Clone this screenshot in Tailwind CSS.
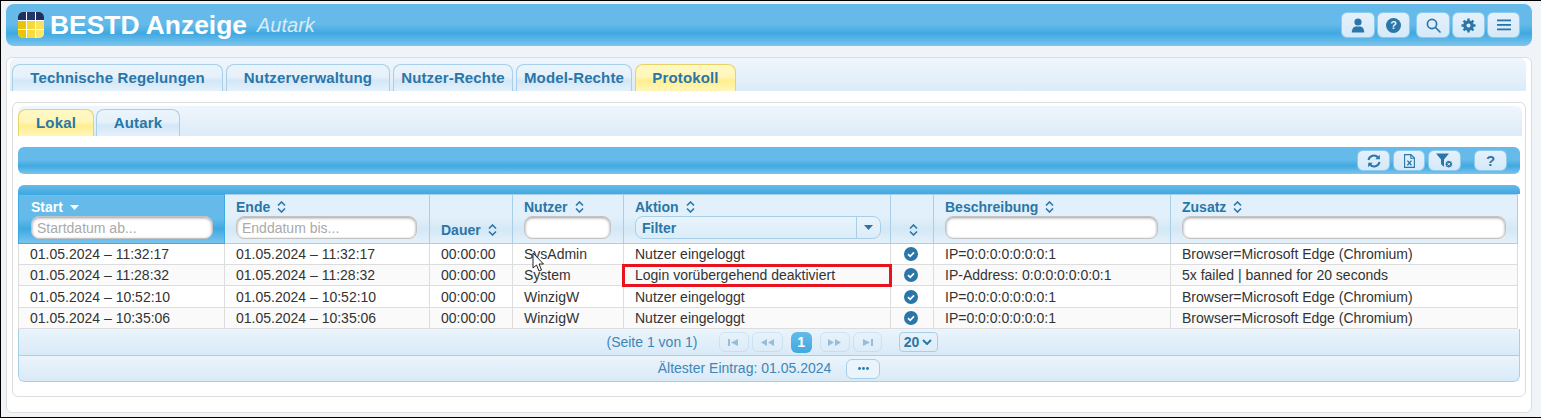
<!DOCTYPE html>
<html lang="de">
<head>
  <meta charset="UTF-8" />
  <meta name="viewport" content="width=device-width, initial-scale=1.0"/>
  <title>BESTD Anzeige</title>
  <script src="https://cdn.jsdelivr.net/npm/@tailwindcss/browser@4"></script>
</head>
<body class="h-[418px] w-[1541px] overflow-hidden border-t border-b border-l border-black bg-[#f0f4f8] font-['Liberation_Sans',Arial,sans-serif] text-[14px] text-[#333]">

  <!-- Kopfzeile -->
  <header class="ml-[5px] mt-[3px] flex h-[42px] w-[1526px] items-center rounded-lg bg-[linear-gradient(#65bae9_0%,#65bae9_48%,#3fa9e1_70%,#7cc5ee_100%)] pl-3 pr-3">
    <div class="grid h-[26px] w-[26px] grid-cols-3 grid-rows-3 gap-px overflow-hidden rounded-[5px] bg-white">
      <span class="bg-[#1d2f5e]"></span><span class="bg-[#22366a]"></span><span class="bg-[#1d2f5e]"></span>
      <span class="bg-[#e8c40c]"></span><span class="bg-[#f5d93a]"></span><span class="bg-[#fbe25a]"></span>
      <span class="bg-[#e8c40c]"></span><span class="bg-[#f7dc40]"></span><span class="bg-[#fde768]"></span>
    </div>
    <h1 class="ml-[6px] text-[26.4px] font-bold leading-none text-white">BESTD Anzeige</h1>
    <span class="ml-[10px] text-[20px] italic leading-none text-[#d8ebf7]">Autark</span>
    <div class="ml-auto flex h-[26px] items-center">
      <button class="flex h-[26px] w-[34px] items-center justify-center rounded-md border border-[#8ccbee] bg-[linear-gradient(#e4f1fb,#d5e9f8)]">
        <svg width="14" height="15" viewBox="0 0 14 15" fill="#2a76a8"><circle cx="7" cy="4" r="3.6"/><path d="M0.8 14.5c0-4 2.2-6 4-6h4.4c1.800 0 4 2 4 6z"/></svg>
      </button>
      <button class="ml-[2px] flex h-[26px] w-[33px] items-center justify-center rounded-md border border-[#8ccbee] bg-[linear-gradient(#e4f1fb,#d5e9f8)]">
        <span class="flex h-[15px] w-[15px] items-center justify-center rounded-full bg-[#2a76a8] text-[11px] font-bold leading-none text-[#e4f1fb]">?</span>
      </button>
      <button class="ml-[6px] flex h-[26px] w-[34px] items-center justify-center rounded-md border border-[#8ccbee] bg-[linear-gradient(#e4f1fb,#d5e9f8)]">
        <svg width="15" height="15" viewBox="0 0 15 15" fill="none" stroke="#2a76a8" stroke-width="1.700"><circle cx="6" cy="6" r="4.600"/><path d="M9.500 9.500l4.500 4.500" stroke-linecap="round"/></svg>
      </button>
      <button class="ml-[2px] flex h-[26px] w-[33px] items-center justify-center rounded-md border border-[#8ccbee] bg-[linear-gradient(#e4f1fb,#d5e9f8)]">
        <svg width="15" height="15" viewBox="0 0 16 16" fill="none" stroke="#2a76a8"><circle cx="8" cy="8" r="3.900" stroke-width="3.400"/><path d="M8 .5v3M8 12.500v3M.5 8h3M12.500 8h3M2.700 2.700l2 2M11.300 11.300l2 2M13.300 2.700l-2 2M4.700 11.300l-2 2" stroke-width="2.600"/></svg>
      </button>
      <button class="ml-[2px] flex h-[26px] w-[33px] items-center justify-center rounded-md border border-[#8ccbee] bg-[linear-gradient(#e4f1fb,#d5e9f8)]">
        <svg width="14" height="12" viewBox="0 0 14 12" fill="#2a76a8"><rect y="0.500" width="14" height="1.800"/><rect y="5" width="14" height="1.800"/><rect y="9.500" width="14" height="1.800"/></svg>
      </button>
    </div>
  </header>

  <!-- Hauptbereich -->
  <main class="ml-[5px] mt-[11px] h-[356px] w-[1526px] rounded-md border border-[#ddd] bg-white px-[3px]">
    <nav class="flex h-[33px] w-[1516px] items-end gap-[3px] rounded-t-md bg-[linear-gradient(#f0f6fc,#dcebf8)] pl-[2px]">
      <a class="flex h-[27px] w-[211px] items-center justify-center rounded-t-lg border border-b-0 border-[#a9cfe8] bg-[linear-gradient(#eaf4fc_0%,#e6f1fa_45%,#d3e7f6_60%,#e4f1fb_100%)] text-[15px] font-bold tracking-[0.15px] text-[#2a76a8]">Technische Regelungen</a>
      <a class="flex h-[27px] w-[164px] items-center justify-center rounded-t-lg border border-b-0 border-[#a9cfe8] bg-[linear-gradient(#eaf4fc_0%,#e6f1fa_45%,#d3e7f6_60%,#e4f1fb_100%)] text-[15px] font-bold tracking-[0.15px] text-[#2a76a8]">Nutzerverwaltung</a>
      <a class="flex h-[27px] w-[120px] items-center justify-center rounded-t-lg border border-b-0 border-[#a9cfe8] bg-[linear-gradient(#eaf4fc_0%,#e6f1fa_45%,#d3e7f6_60%,#e4f1fb_100%)] text-[15px] font-bold tracking-[0.15px] text-[#2a76a8]">Nutzer-Rechte</a>
      <a class="flex h-[27px] w-[116px] items-center justify-center rounded-t-lg border border-b-0 border-[#a9cfe8] bg-[linear-gradient(#eaf4fc_0%,#e6f1fa_45%,#d3e7f6_60%,#e4f1fb_100%)] text-[15px] font-bold tracking-[0.15px] text-[#2a76a8]">Model-Rechte</a>
      <a class="flex h-[27px] w-[101px] items-center justify-center rounded-t-lg border border-b-0 border-[#e6d36a] bg-[linear-gradient(#fff8c4_0%,#fff6b8_45%,#ffef8f_60%,#fff6bc_100%)] text-[15px] font-bold tracking-[0.15px] text-[#2a76a8]">Protokoll</a>
    </nav>

    <section class="ml-[2px] mt-[11px] h-[295px] w-[1514px] rounded-md border border-[#ddd] bg-white px-[5px] pt-[3px]">
      <nav class="flex h-[30px] w-[1504px] items-end gap-[2px] rounded-t-md bg-[linear-gradient(#f0f6fc,#dcebf8)]">
        <a class="flex h-[27px] w-[76px] items-center justify-center rounded-t-lg border border-b-0 border-[#e6d36a] bg-[linear-gradient(#fff8c4_0%,#fff6b8_45%,#ffef8f_60%,#fff6bc_100%)] text-[15px] font-bold tracking-[0.15px] text-[#2a76a8]">Lokal</a>
        <a class="flex h-[27px] w-[84px] items-center justify-center rounded-t-lg border border-b-0 border-[#a9cfe8] bg-[linear-gradient(#eaf4fc_0%,#e6f1fa_45%,#d3e7f6_60%,#e4f1fb_100%)] text-[15px] font-bold tracking-[0.15px] text-[#2a76a8]">Autark</a>
      </nav>

      <!-- Werkzeugleiste -->
      <div class="mt-[11px] flex h-[27px] w-[1502px] items-center justify-end rounded-md bg-[linear-gradient(#65bae9_0%,#65bae9_48%,#3fa9e1_70%,#7cc5ee_100%)] pr-[13px]">
        <button class="flex h-[21px] w-[33px] items-center justify-center rounded-md border border-[#8ccbee] bg-[linear-gradient(#e4f1fb,#d5e9f8)]">
          <svg width="14" height="14" viewBox="0 0 14 14" fill="none" stroke="#2a76a8" stroke-width="2"><path d="M1.500 6A5.500 5.500 0 0 1 11 3.500"/><path d="M12.500 8A5.500 5.500 0 0 1 3 10.500"/><path d="M12.800 0.800v4.500H8.300z" fill="#2a76a8" stroke="none"/><path d="M1.200 13.200V8.700h4.500z" fill="#2a76a8" stroke="none"/></svg>
        </button>
        <button class="ml-[3px] flex h-[21px] w-[32px] items-center justify-center rounded-md border border-[#8ccbee] bg-[linear-gradient(#e4f1fb,#d5e9f8)]">
          <svg width="11" height="14" viewBox="0 0 11 14" fill="none" stroke="#2a76a8" stroke-width="1.100"><path d="M0.600 0.600h6.300l3.500 3.500v9.300H0.600z"/><path d="M6.800 0.600v3.600h3.600"/><path d="M3.400 6.600l4 4.600M7.400 6.600l-4 4.600" stroke-width="1.300"/></svg>
        </button>
        <button class="ml-[3px] flex h-[21px] w-[33px] items-center justify-center rounded-md border border-[#8ccbee] bg-[linear-gradient(#e4f1fb,#d5e9f8)]">
          <svg width="20" height="16" viewBox="0 0 20 16"><path d="M1 0.500h13L9 6.500V14L6 11V6.500z" fill="#2a76a8"/><circle cx="13.800" cy="11.200" r="3.800" fill="#2a76a8" stroke="#dcedf9"/><path d="M12.500 9.900l2.600 2.600M15.100 9.900l-2.600 2.600" stroke="#dcedf9"/></svg>
        </button>
        <button class="ml-[13px] flex h-[21px] w-[33px] items-center justify-center rounded-md border border-[#8ccbee] bg-[linear-gradient(#e4f1fb,#d5e9f8)] text-[15px] font-bold leading-none text-[#2a76a8]">?</button>
      </div>

      <!-- Tabelle -->
      <div class="mt-[11px] h-[9px] w-[1502px] rounded-t-md bg-[linear-gradient(#65bae9,#3fa9e1)]"></div>
      <div class="w-[1502px] overflow-hidden rounded-b-md">
        <table class="w-[1499px] table-fixed border-collapse text-left leading-[20px]">
          <colgroup>
            <col class="w-[206px]"/><col class="w-[205px]"/><col class="w-[83px]"/><col class="w-[111px]"/><col class="w-[267px]"/><col class="w-[43px]"/><col class="w-[237px]"/><col class="w-[347px]"/>
          </colgroup>
          <thead>
            <tr class="h-[49px] bg-[linear-gradient(#e1f0fa_0%,#e1f0fa_45%,#d4e8f6_70%,#e6f2fb_100%)] text-[14px] font-bold text-[#2a76a8]">
              <th class="border border-[#3fa9e1] bg-[linear-gradient(#65bae9_0%,#65bae9_48%,#3fa9e1_70%,#7cc5ee_100%)] px-3 align-top text-white">
                <div class="mt-[3px] flex h-[18px] items-center">Start
                  <svg class="ml-[7px]" width="9" height="5" viewBox="0 0 9 5" fill="#fff"><path d="M0 0h9L4.500 5z"/></svg>
                </div>
                <input placeholder="Startdatum ab..." class="h-[23px] w-[182px] rounded-lg border border-[#c3c3c3] bg-white px-[5px] text-[14px] font-normal shadow-[inset_0_1px_3px_rgba(0,0,0,0.4)] placeholder:text-[#aaa]"/>
              </th>
              <th class="border border-[#a9cfe8] px-[11px] align-top">
                <div class="mt-[3px] flex h-[18px] items-center">Ende
                  <svg class="ml-[7px]" width="9" height="12" viewBox="0 0 9 12" fill="none" stroke="#2a76a8" stroke-width="1.600"><path d="M1 4.500l3.500-3.500L8 4.500M1 7.500L4.500 11 8 7.500"/></svg>
                </div>
                <input placeholder="Enddatum bis..." class="h-[23px] w-[181px] rounded-lg border border-[#c3c3c3] bg-white px-[5px] text-[14px] font-normal shadow-[inset_0_1px_3px_rgba(0,0,0,0.4)] placeholder:text-[#aaa]"/>
              </th>
              <th class="border border-[#a9cfe8] px-[11px] align-bottom">
                <div class="mb-[4px] flex h-[18px] items-center">Dauer
                  <svg class="ml-[7px]" width="9" height="12" viewBox="0 0 9 12" fill="none" stroke="#2a76a8" stroke-width="1.600"><path d="M1 4.500l3.500-3.500L8 4.500M1 7.500L4.500 11 8 7.500"/></svg>
                </div>
              </th>
              <th class="border border-[#a9cfe8] px-[11px] align-top">
                <div class="mt-[3px] flex h-[18px] items-center">Nutzer
                  <svg class="ml-[7px]" width="9" height="12" viewBox="0 0 9 12" fill="none" stroke="#2a76a8" stroke-width="1.600"><path d="M1 4.500l3.500-3.500L8 4.500M1 7.500L4.500 11 8 7.500"/></svg>
                </div>
                <input class="h-[23px] w-[87px] rounded-lg border border-[#c3c3c3] bg-white shadow-[inset_0_1px_3px_rgba(0,0,0,0.4)]"/>
              </th>
              <th class="border border-[#a9cfe8] px-[11px] align-top">
                <div class="mt-[3px] flex h-[18px] items-center">Aktion
                  <svg class="ml-[7px]" width="9" height="12" viewBox="0 0 9 12" fill="none" stroke="#2a76a8" stroke-width="1.600"><path d="M1 4.500l3.500-3.500L8 4.500M1 7.500L4.500 11 8 7.500"/></svg>
                </div>
                <div class="flex h-[23px] w-[246px] items-center rounded-lg border border-[#a9cfe8] bg-[linear-gradient(#e9f4fc,#dcecf8)]">
                  <span class="flex-1 pl-[6px]">Filter</span>
                  <span class="flex h-full w-[24px] items-center justify-center border-l border-[#a9cfe8]">
                    <svg width="9" height="5" viewBox="0 0 9 5" fill="#2a76a8"><path d="M0 0h9L4.500 5z"/></svg>
                  </span>
                </div>
              </th>
              <th class="border border-[#a9cfe8] pl-[2px] align-bottom">
                <div class="mb-[4px] flex h-[18px] items-center justify-center">
                  <svg width="9" height="12" viewBox="0 0 9 12" fill="none" stroke="#2a76a8" stroke-width="1.600"><path d="M1 4.500l3.500-3.500L8 4.500M1 7.500L4.500 11 8 7.500"/></svg>
                </div>
              </th>
              <th class="border border-[#a9cfe8] px-[11px] align-top">
                <div class="mt-[3px] flex h-[18px] items-center">Beschreibung
                  <svg class="ml-[7px]" width="9" height="12" viewBox="0 0 9 12" fill="none" stroke="#2a76a8" stroke-width="1.600"><path d="M1 4.500l3.500-3.500L8 4.500M1 7.500L4.500 11 8 7.500"/></svg>
                </div>
                <input class="h-[23px] w-[213px] rounded-lg border border-[#c3c3c3] bg-white shadow-[inset_0_1px_3px_rgba(0,0,0,0.4)]"/>
              </th>
              <th class="border border-[#a9cfe8] px-[11px] align-top">
                <div class="mt-[3px] flex h-[18px] items-center">Zusatz
                  <svg class="ml-[7px]" width="9" height="12" viewBox="0 0 9 12" fill="none" stroke="#2a76a8" stroke-width="1.600"><path d="M1 4.500l3.500-3.500L8 4.500M1 7.500L4.500 11 8 7.500"/></svg>
                </div>
                <input class="h-[23px] w-[324px] rounded-lg border border-[#c3c3c3] bg-white shadow-[inset_0_1px_3px_rgba(0,0,0,0.4)]"/>
              </th>
            </tr>
          </thead>
          <tbody>
            <tr class="h-[21px] bg-white">
              <td class="border border-[#ddd] px-[11px] py-0">01.05.2024 – 11:32:17</td>
              <td class="border border-[#ddd] px-[11px] py-0">01.05.2024 – 11:32:17</td>
              <td class="border border-[#ddd] px-[11px] py-0">00:00:00</td>
              <td class="border border-[#ddd] px-[11px] py-0">SysAdmin</td>
              <td class="border border-[#ddd] px-[11px] py-0">Nutzer eingeloggt</td>
              <td class="border border-[#ddd] py-0 pr-[2px]"><svg class="mx-auto block" width="14" height="14" viewBox="0 0 14 14"><circle cx="7" cy="7" r="7" fill="#2a76a8"/><path d="M4 7.200l2.200 2.200L10 5.400" fill="none" stroke="#fff" stroke-width="1.700"/></svg></td>
              <td class="border border-[#ddd] px-[11px] py-0">IP=0:0:0:0:0:0:0:1</td>
              <td class="border border-[#ddd] px-[11px] py-0">Browser=Microsoft Edge (Chromium)</td>
            </tr>
            <tr class="h-[21px] bg-[#fafafa]">
              <td class="border border-[#ddd] px-[11px] py-0">01.05.2024 – 11:28:32</td>
              <td class="border border-[#ddd] px-[11px] py-0">01.05.2024 – 11:28:32</td>
              <td class="border border-[#ddd] px-[11px] py-0">00:00:00</td>
              <td class="border border-[#ddd] px-[11px] py-0">System</td>
              <td class="relative border border-[#ddd] px-[11px] py-0">Login vorübergehend deaktiviert
                <span class="absolute -top-px left-[-2px] h-[23px] w-[270px] border-[3px] border-[#e8131f]"></span>
              </td>
              <td class="border border-[#ddd] py-0 pr-[2px]"><svg class="mx-auto block" width="14" height="14" viewBox="0 0 14 14"><circle cx="7" cy="7" r="7" fill="#2a76a8"/><path d="M4 7.200l2.200 2.200L10 5.400" fill="none" stroke="#fff" stroke-width="1.700"/></svg></td>
              <td class="border border-[#ddd] px-[11px] py-0">IP-Address: 0:0:0:0:0:0:0:1</td>
              <td class="border border-[#ddd] px-[11px] py-0">5x failed | banned for 20 seconds</td>
            </tr>
            <tr class="h-[22px] bg-white">
              <td class="border border-[#ddd] px-[11px] py-0">01.05.2024 – 10:52:10</td>
              <td class="border border-[#ddd] px-[11px] py-0">01.05.2024 – 10:52:10</td>
              <td class="border border-[#ddd] px-[11px] py-0">00:00:00</td>
              <td class="border border-[#ddd] px-[11px] py-0">WinzigW</td>
              <td class="border border-[#ddd] px-[11px] py-0">Nutzer eingeloggt</td>
              <td class="border border-[#ddd] py-0 pr-[2px]"><svg class="mx-auto block" width="14" height="14" viewBox="0 0 14 14"><circle cx="7" cy="7" r="7" fill="#2a76a8"/><path d="M4 7.200l2.200 2.200L10 5.400" fill="none" stroke="#fff" stroke-width="1.700"/></svg></td>
              <td class="border border-[#ddd] px-[11px] py-0">IP=0:0:0:0:0:0:0:1</td>
              <td class="border border-[#ddd] px-[11px] py-0">Browser=Microsoft Edge (Chromium)</td>
            </tr>
            <tr class="h-[21px] bg-[#fafafa]">
              <td class="border border-[#ddd] px-[11px] py-0">01.05.2024 – 10:35:06</td>
              <td class="border border-[#ddd] px-[11px] py-0">01.05.2024 – 10:35:06</td>
              <td class="border border-[#ddd] px-[11px] py-0">00:00:00</td>
              <td class="border border-[#ddd] px-[11px] py-0">WinzigW</td>
              <td class="border border-[#ddd] px-[11px] py-0">Nutzer eingeloggt</td>
              <td class="border border-[#ddd] py-0 pr-[2px]"><svg class="mx-auto block" width="14" height="14" viewBox="0 0 14 14"><circle cx="7" cy="7" r="7" fill="#2a76a8"/><path d="M4 7.200l2.200 2.200L10 5.400" fill="none" stroke="#fff" stroke-width="1.700"/></svg></td>
              <td class="border border-[#ddd] px-[11px] py-0">IP=0:0:0:0:0:0:0:1</td>
              <td class="border border-[#ddd] px-[11px] py-0">Browser=Microsoft Edge (Chromium)</td>
            </tr>
          </tbody>
        </table>

        <!-- Seitennavigation -->
        <div class="flex h-[27px] items-center justify-center border-x border-b border-[#a9cfe8] bg-[linear-gradient(#eaf4fc,#d9eaf7)] pl-[6px] text-[#3f86b5]">
          <span>(Seite 1 von 1)</span>
          <div class="ml-[21px] flex items-center gap-[3px] opacity-40">
            <button class="flex h-[20px] w-[30px] items-center justify-center rounded-md border border-[#a9cfe8]"><svg width="11" height="7" viewBox="0 0 11 7" fill="#2a76a8"><rect width="2" height="7"/><path d="M10 0v7L3 3.500z"/></svg></button>
            <button class="flex h-[20px] w-[31px] items-center justify-center rounded-md border border-[#a9cfe8]"><svg width="13" height="7" viewBox="0 0 13 7" fill="#2a76a8"><path d="M6 0v7L0 3.500zM13 0v7L7 3.500z"/></svg></button>
          </div>
          <button class="mx-[8px] flex h-[21px] w-[21px] items-center justify-center rounded-md bg-[linear-gradient(#65bae9,#3fa9e1)] font-bold text-white">1</button>
          <div class="flex items-center gap-[3px] opacity-40">
            <button class="flex h-[20px] w-[30px] items-center justify-center rounded-md border border-[#a9cfe8]"><svg width="13" height="7" viewBox="0 0 13 7" fill="#2a76a8"><path d="M0 0v7l6-3.500zM7 0v7l6-3.500z"/></svg></button>
            <button class="flex h-[20px] w-[29px] items-center justify-center rounded-md border border-[#a9cfe8]"><svg width="11" height="7" viewBox="0 0 11 7" fill="#2a76a8"><path d="M1 0v7l7-3.500z"/><rect x="9" width="2" height="7"/></svg></button>
          </div>
          <div class="ml-[17px] flex h-[20px] w-[39px] items-center justify-center gap-[3px] rounded-[4px] border border-[#a9cfe8] font-bold text-[#2a76a8]">20
            <svg width="10" height="6" viewBox="0 0 10 6" fill="none" stroke="#2a76a8" stroke-width="2"><path d="M1 1l4 4 4-4"/></svg>
          </div>
        </div>
        <div class="flex h-[26px] items-center justify-center rounded-b-md border-x border-b border-[#a9cfe8] bg-[linear-gradient(#eaf4fc,#d9eaf7)] text-[#3f86b5]">
          <span>Ältester Eintrag: 01.05.2024</span>
          <button class="ml-[15px] flex h-[20px] w-[34px] items-center justify-center rounded-md border border-[#a9cfe8] bg-[#e9f4fc]">
            <svg width="11" height="3" viewBox="0 0 11 3" fill="#2a76a8"><circle cx="1.500" cy="1.500" r="1.400"/><circle cx="5.500" cy="1.500" r="1.400"/><circle cx="9.500" cy="1.500" r="1.400"/></svg>
          </button>
        </div>
      </div>
    </section>
  </main>

  <!-- Mauszeiger im Screenshot -->
  <svg class="absolute left-[532px] top-[252px]" width="13" height="20" viewBox="0 0 13 20"><path d="M1 1v15l3.500-3 2.500 6 2.500-1-2.500-6h4.500z" fill="#fff" stroke="#222" stroke-width="1"/></svg>
</body>
</html>
